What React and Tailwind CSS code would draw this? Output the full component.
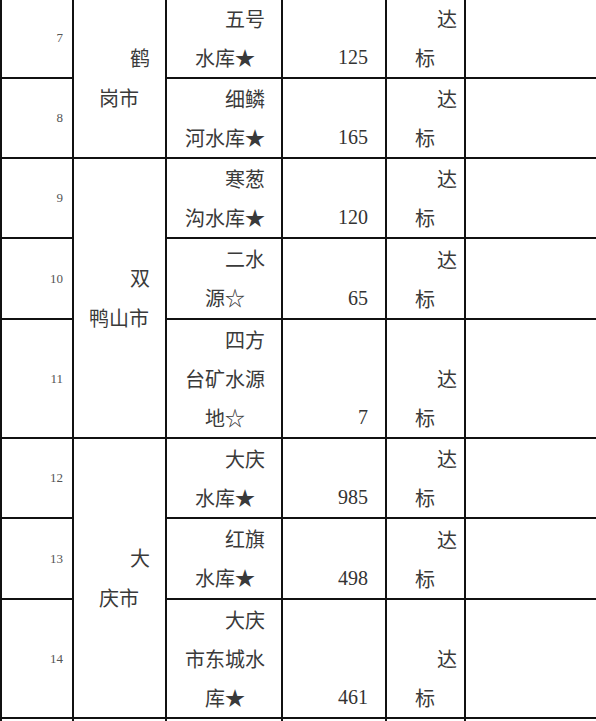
import React from "react";

const rows = [
  { n: 7, name: ["五号", "水库★"], v: "125" },
  { n: 8, name: ["细鳞", "河水库★"], v: "165" },
  { n: 9, name: ["寒葱", "沟水库★"], v: "120" },
  { n: 10, name: ["二水", "源☆"], v: "65", pad: "pb-[1px]" },
  { n: 11, name: ["四方", "台矿水源", "地☆"], v: "7" },
  { n: 12, name: ["大庆", "水库★"], v: "985" },
  { n: 13, name: ["红旗", "水库★"], v: "498", pad: "pb-[1px]" },
  { n: 14, name: ["大庆", "市东城水", "库★"], v: "461" },
];

// city cells start at these row indexes
const cities = {
  0: { lines: ["鹤", "岗市"], span: "row-span-2" },
  2: { lines: ["双", "鸭山市"], span: "row-span-3" },
  5: { lines: ["大", "庆市"], span: "row-span-3" },
};

const cell = "border-r-2 border-b-2 border-[#111]";
const cjk = "font-['Noto_Sans_CJK_SC','Noto_Sans',sans-serif] text-[20px] text-[#3a3a3a]";
const serif = "font-['Liberation_Serif',serif]";

function Lines({ lines, leading }) {
  return lines.map((l, i) => (
    <div
      key={i}
      className={`${leading} whitespace-nowrap ${i === lines.length - 1 ? "text-center" : "text-right"}`}
    >
      {l}
    </div>
  ));
}

export default function App() {
  return (
    <div className="h-[721px] w-[596px] overflow-hidden bg-white">
      <div className={`mt-[-1px] grid grid-cols-[74px_93px_116px_104px_79px_1fr] ${cjk}`}>
        {rows.map((r, i) => (
          <React.Fragment key={r.n}>
            {/* number */}
            <div className={`${cell} border-l-2 flex items-center justify-end pr-[9px] ${serif} text-[13px] text-[#555]`}>
              {r.n}
            </div>

            {/* city */}
            {cities[i] && (
              <div className={`${cell} ${cities[i].span} flex flex-col justify-center pl-[14px] pr-[15px]`}>
                <Lines lines={cities[i].lines} leading="leading-[40px]" />
              </div>
            )}

            {/* name */}
            <div className={`${cell} pl-[18px] pr-[16px] ${r.pad || ""}`}>
              <Lines lines={r.name} leading="leading-[39px]" />
            </div>

            {/* value */}
            <div className={`${cell} flex flex-col justify-end pr-[17px] text-right ${serif} text-[20px] text-[#333] leading-[39px]`}>
              {r.v}
            </div>

            {/* status */}
            <div className={`${cell} flex flex-col justify-end pl-[28px] pr-[7px]`}>
              <div className="leading-[39px] text-right">达</div>
              <div className="leading-[39px] text-left">标</div>
            </div>

            <div className="border-b-2 border-[#111]" />
          </React.Fragment>
        ))}

        {/* next row, cut off by the page edge */}
        <div className={`${cell} border-l-2 h-[40px]`} />
        <div className={cell} />
        <div className={cell} />
        <div className={cell} />
        <div className={cell} />
        <div className="border-b-2 border-[#111]" />
      </div>
    </div>
  );
}
